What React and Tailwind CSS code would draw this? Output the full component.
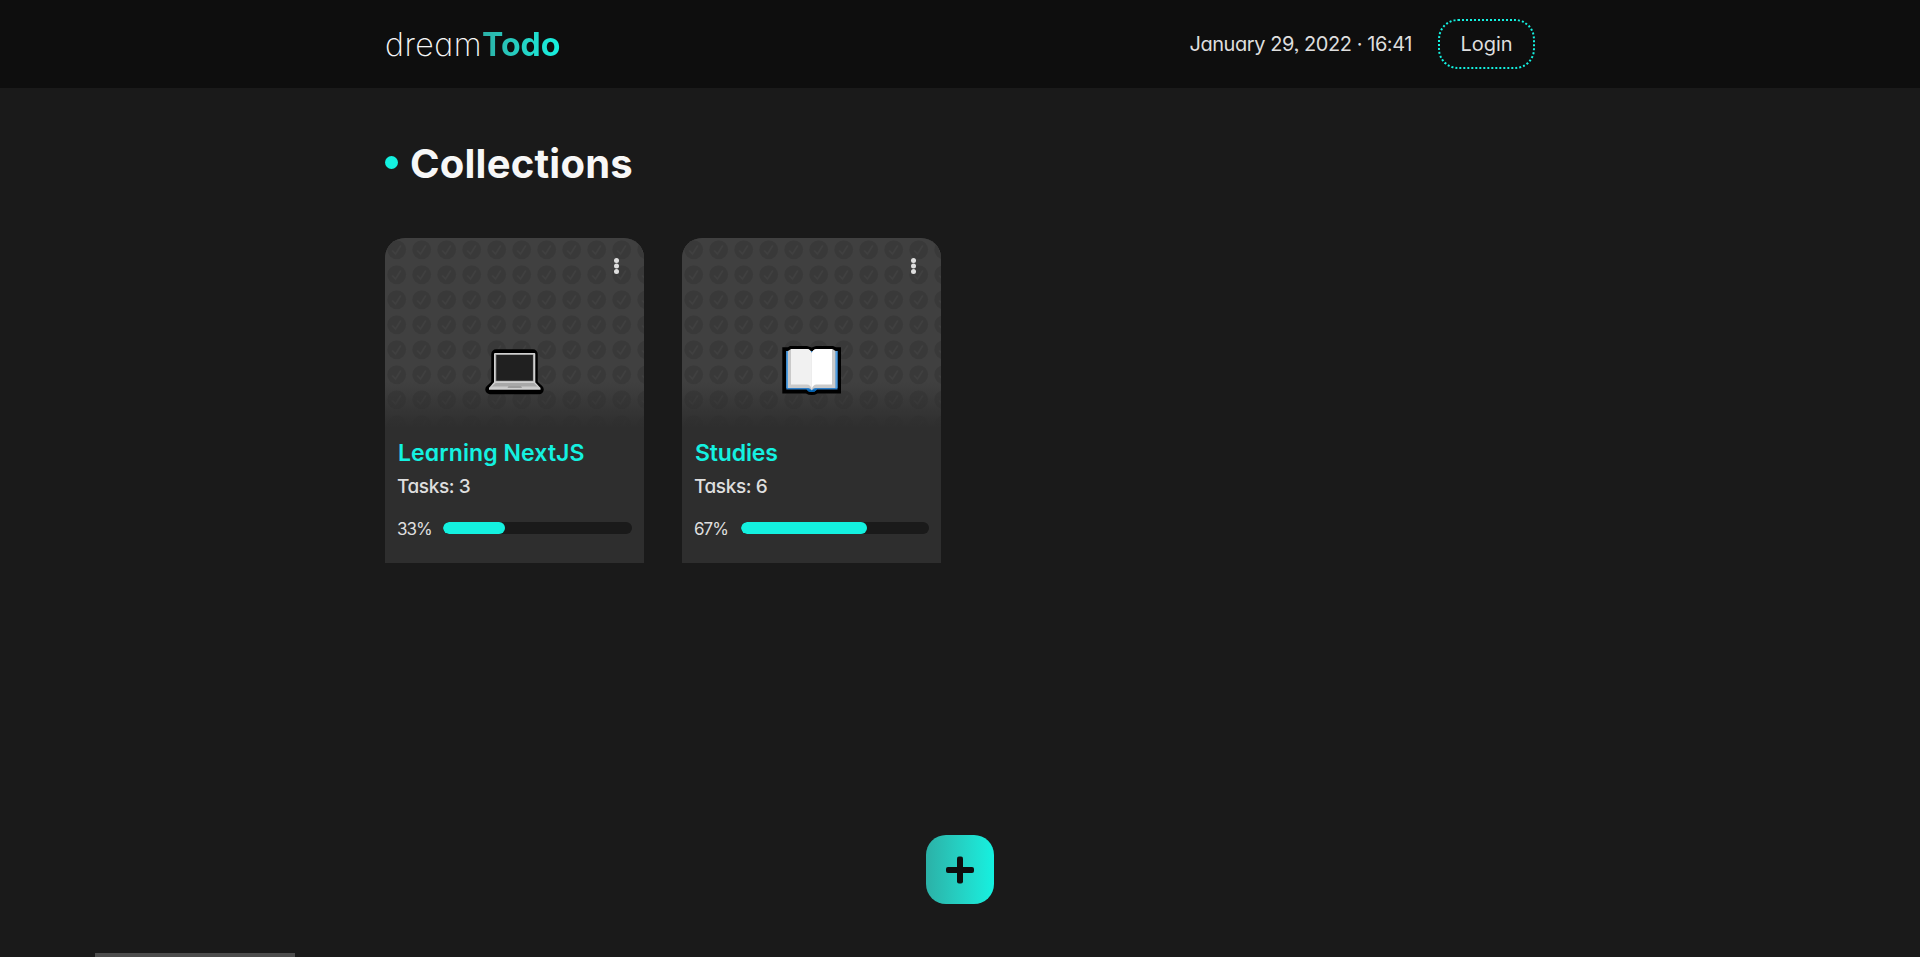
import React from 'react';

const collections = [
  { title: 'Learning NextJS', titleClass: 'tracking-[0.1px]', tasks: 3, percent: 33, labelClass: 'w-[46px]', Icon: Laptop },
  { title: 'Studies', titleClass: 'tracking-[-0.15px]', tasks: 6, percent: 67, labelClass: 'w-[47px]', Icon: Book },
];

function Laptop() {
  return (
    <svg className="block h-[70px] w-[80px]" viewBox="0 0 80 70">
      <path d="M21 19H58V49L64 54.500H15L21 49Z" fill="#000" stroke="#000" strokeWidth="9.500" strokeLinejoin="round" />
      <rect x="19" y="18" width="41.300" height="30" rx="1" fill="#d0d0d0" />
      <rect x="20.500" y="19.300" width="38" height="27.200" fill="#8c8c8c" />
      <rect x="21.300" y="20" width="36.600" height="25.700" fill="#202020" />
      <path d="M19.500 46.500H59.500L65.500 53V54.800H14V53Z" fill="#cfcfcf" />
      <path d="M20.500 48H59L63 52H16.500Z" fill="#a8a8a8" />
      <path d="M16.500 51.500H63L65.500 53H14Z" fill="#c9c9c9" />
      <path d="M33.500 51H46L47 53H32.500Z" fill="#9c9c9c" />
    </svg>
  );
}

function Book() {
  return (
    <svg className="block h-[70px] w-[80px]" viewBox="0 0 80 70">
      <path d="M10.300 12.300H16L18 11H35L39.700 12.500L44 11H61L64 12.300H69V58.500H45.500Q43 60 39.700 60T34 58.500H10.300Z" fill="#000" />
      <path d="M14.300 16H65.500V54.500H45Q43 57 39.700 57T34.500 54.500H14.300Z" fill="#2f7fc8" />
      <path d="M14.300 16H16V53H14.300ZM63.800 16H65.500V53H63.800Z" fill="#4f9fe2" />
      <path d="M16 16L19 14H35Q38 14 39.700 18Q41.500 14 44.500 14H60.500L63.500 16V53H43Q41 53 39.700 55.500Q38.500 53 36.500 53H16Z" fill="#cacaca" />
      <path d="M19 14H35Q38 14 39.700 18V54Q38.500 49.500 35 49.500H19Z" fill="#f1f1f1" />
      <path d="M60 14H44.500Q41.500 14 39.700 18V54Q41 49.500 44.500 49.500H60Z" fill="#fff" />
      <path d="M34.500 54.500H37Q38.500 54.500 39.700 55.500Q41 54.500 43 54.500H45Q43 57 39.700 57T34.500 54.500Z" fill="#0062b1" />
    </svg>
  );
}

function CheckPattern({ id }) {
  return (
    <svg className="absolute inset-0 h-full w-full">
      <defs>
        <pattern id={id} width="25" height="25" patternUnits="userSpaceOnUse">
          <circle cx="11.700" cy="11.700" r="9.500" fill="#393939" />
          <path d="M7.200 12.500L10.500 16L15.800 7.500" fill="none" stroke="#404040" strokeWidth="1.500" />
        </pattern>
      </defs>
      <rect width="100%" height="100%" fill={`url(#${id})`} />
    </svg>
  );
}

function Card({ title, titleClass, labelClass, tasks, percent, Icon }) {
  return (
    <article className="h-[325px] w-[259px] overflow-hidden rounded-t-[20px] bg-[#2e2e2e]">
      <div className="relative h-[190px] bg-[#404040]">
        <CheckPattern id={`checks-${percent}`} />
        <div className="absolute inset-x-0 bottom-0 h-[46px] bg-linear-to-b from-[#2e2e2e]/0 to-[#2e2e2e]" />
        <svg className="absolute top-[19px] right-[22px] h-[18px] w-[11px]" viewBox="0 0 11 18" fill="#dedede">
          <circle cx="5.500" cy="3.500" r="2.500" />
          <circle cx="5.500" cy="9" r="2.500" />
          <circle cx="5.500" cy="14.500" r="2.500" />
        </svg>
        <div className="absolute top-[97px] left-[90px]">
          <Icon />
        </div>
      </div>
      <div className="pt-[10px] pr-3 pl-3">
        <h2 className={`pl-px text-[23px] leading-[30px] font-semibold whitespace-nowrap text-[#14f1e0] ${titleClass}`}>{title}</h2>
        <p className="mt-1 text-[19px] leading-[30px] font-medium tracking-[-0.4px] text-[#dedede]">Tasks: {tasks}</p>
        <div className="mt-[14px] flex h-6 items-center">
          <span className={`pt-[3px] text-[17px] tracking-[-1px] text-[#dedede] ${labelClass}`}>{percent}%</span>
          <div className="h-3 flex-1 overflow-hidden rounded-[6px] bg-[#1a1a1a]">
            <div className="h-full rounded-[6px] bg-[#14f1e0]" style={{ width: `${percent}%` }} />
          </div>
        </div>
      </div>
    </article>
  );
}

export default function App() {
  return (
    <div className="flex h-[957px] w-full flex-col overflow-hidden bg-[#1a1a1a] font-[Inter,Lato,sans-serif] [font-feature-settings:'cv11','ss03']">
      <header className="h-[88px] shrink-0 bg-[#0e0e0e]">
        <div className="mx-auto flex h-full w-[1150px] items-center justify-between">
          <a className="flex pt-[2px] text-[32px] leading-[40px]">
            <span className="font-extralight tracking-[0.5px] text-[#f7f7f7]">dream</span>
            <span className="bg-linear-to-r from-[#2bb1a7] to-[#14f1e0] bg-clip-text font-bold text-transparent">Todo</span>
          </a>
          <div className="flex items-center text-[20px] text-[#dedede]">
            <span className="mr-[26px] tracking-[-0.43px]">January 29, 2022 · 16:41</span>
            <button className="h-[50px] w-[97px] rounded-[20px] border-2 border-dotted border-[#14f1e0]">Login</button>
          </div>
        </div>
      </header>
      <main className="mx-auto flex w-[1150px] flex-1 flex-col">
        <h1 className="mt-[51px] flex h-[50px] items-center text-[40px] leading-[50px] font-bold tracking-[0.22px] text-[#f7f7f7]">
          <span className="mr-[12px] mb-[3px] size-[13px] rounded-full bg-[#14f1e0]" />
          Collections
        </h1>
        <section className="mt-[49px] flex gap-[38px]">
          {collections.map((c) => (
            <Card key={c.title} {...c} />
          ))}
        </section>
        <button className="mt-auto mb-[49px] flex h-[69px] w-[68px] items-center justify-center self-center rounded-[20px] bg-linear-to-r from-[#2bb1a7] to-[#14f1e0]">
          <svg className="h-[28px] w-[28px]" viewBox="0 0 28 28" fill="#0e0e0e">
            <rect x="11" y="0.500" width="6" height="27" rx="2" />
            <rect x="0" y="11" width="28" height="6" rx="2" />
          </svg>
        </button>
      </main>
      <div className="ml-[95px] h-1 w-[200px] shrink-0 bg-[#4d4d4d]" />
    </div>
  );
}
